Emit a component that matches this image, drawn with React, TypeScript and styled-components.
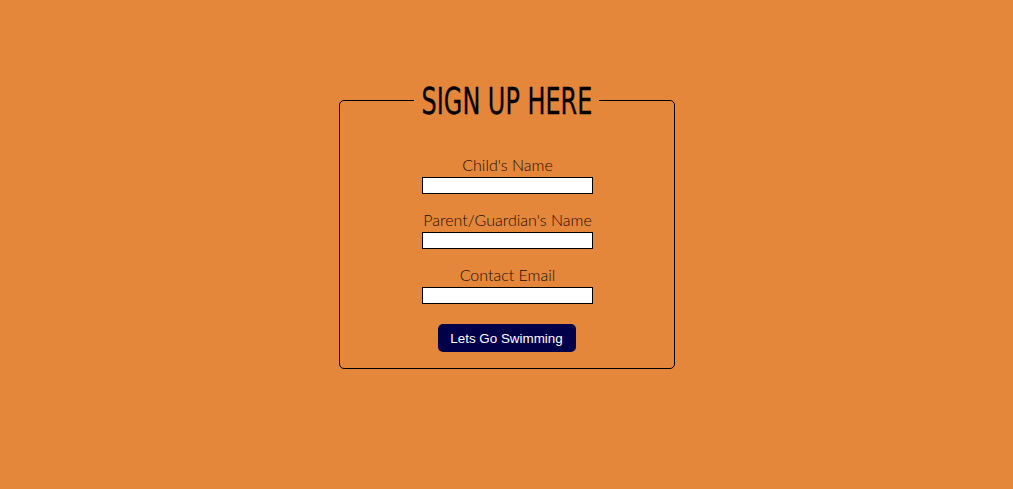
import React from 'react';
import styled, { createGlobalStyle } from 'styled-components';

const GlobalStyle = createGlobalStyle`
  html, body {
    margin: 0;
    padding: 0;
    background-color: #e4873b;
    height: 100%;
  }
`;

const Page = styled.main`
  display: flex;
  justify-content: center;
  padding-top: 83px;
  width: 1013px;
  height: 489px;
  box-sizing: border-box;
`;

const Fieldset = styled.fieldset`
  width: 336px;
  height: 286px;
  box-sizing: border-box;
  margin: 0;
  padding: 0;
  border: 1px solid #000000;
  border-radius: 5px;
`;

const Legend = styled.legend`
  margin: 0 auto;
  padding: 0 6px;
  width: 173px;
  height: 34px;
  display: flex;
  justify-content: center;
  overflow: visible;
`;

const Title = styled.span`
  display: inline-block;
  font-family: 'DejaVu Sans Condensed', 'DejaVu Sans', sans-serif;
  font-size: 38px;
  line-height: 36px;
  color: #000000;
  white-space: nowrap;
  transform: scaleX(0.7);
  transform-origin: center;
  -webkit-text-stroke: 0.3px #000000;
`;

const Form = styled.form`
  display: flex;
  flex-direction: column;
  align-items: center;
  padding-top: 38px;
  padding-left: 2px;
`;

const Field = styled.div`
  display: flex;
  flex-direction: column;
  align-items: center;
  margin-bottom: 16px;
`;

const Label = styled.label`
  font-family: Lato, 'Open Sans', sans-serif;
  font-weight: 300;
  font-size: 16px;
  line-height: 20px;
  margin-bottom: 2px;
  color: #1c0c02;
`;

const Input = styled.input`
  width: 171px;
  height: 17px;
  box-sizing: border-box;
  margin: 0;
  padding: 0 3px;
  border: 1px solid #000000;
  background: #ffffff;
`;

const Button = styled.button`
  margin: 4px 2px 0 0;
  width: 138px;
  height: 28px;
  border: none;
  border-radius: 5px;
  background-color: #03004a;
  color: #ffffff;
  font-family: 'Liberation Sans', Arial, sans-serif;
  font-size: 13.4px;
  cursor: pointer;
`;

const fields = [
  { id: 'child', label: "Child's Name", type: 'text' },
  { id: 'parent', label: "Parent/Guardian's Name", type: 'text' },
  { id: 'email', label: 'Contact Email', type: 'email' },
];

function App() {
  return (
    <>
      <GlobalStyle />
      <Page>
        <Fieldset>
          <Legend>
            <Title>SIGN UP HERE</Title>
          </Legend>
          <Form onSubmit={(e) => e.preventDefault()}>
            {fields.map((f) => (
              <Field key={f.id}>
                <Label htmlFor={f.id}>{f.label}</Label>
                <Input id={f.id} type={f.type} />
              </Field>
            ))}
            <Button type="submit">Lets Go Swimming</Button>
          </Form>
        </Fieldset>
      </Page>
    </>
  );
}

export default App;
